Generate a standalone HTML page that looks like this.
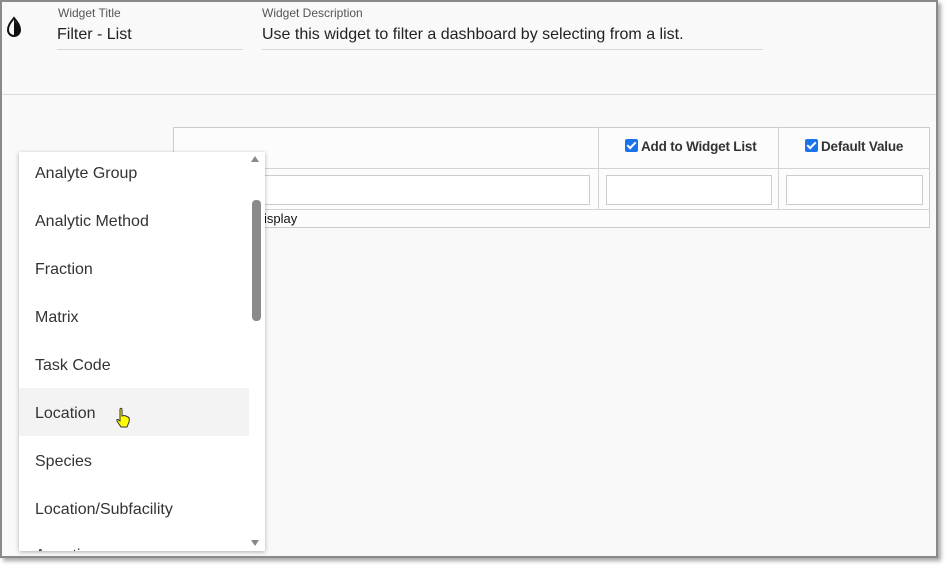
<!DOCTYPE html>
<html><head><style>
*{margin:0;padding:0;box-sizing:border-box}
body{width:951px;height:573px;background:#fff;position:relative;overflow:hidden;font-family:"Liberation Sans",sans-serif;color:#222}
.panel{position:absolute;left:0;top:0;width:938px;height:558px;background:#f9f9f9;border:2px solid #8a8a8a;box-shadow:3px 3px 4px rgba(0,0,0,.35)}
.a{position:absolute}
.lbl{font-size:12px;color:#555}
.val{font-size:16px;color:#222}
.ul{height:1px;background:#d8d8d8}
.hl{position:absolute;height:1px;background:#d4d4d4}
.vl{position:absolute;width:1px;background:#d4d4d4}
.inp{position:absolute;background:#fff;border:1px solid #ccc}
.cb{display:inline-block;width:13px;height:13px;background:#1a73e8;border-radius:2px;vertical-align:-1px;margin-right:3px;position:relative}
.cb:after{content:"";position:absolute;left:4px;top:1px;width:3px;height:7px;border:solid #fff;border-width:0 2px 2px 0;transform:rotate(45deg)}
.th{font-size:13.5px;font-weight:bold;color:#333;letter-spacing:-0.2px}
.dd{position:absolute;left:19px;top:152px;width:246px;height:399px;background:#fff;box-shadow:0 1px 4px rgba(0,0,0,.3);overflow:hidden}
.it{position:absolute;left:16px;font-size:16px;color:#333}
</style></head><body>
<div class="panel">
<svg class="a" style="left:2px;top:14px" width="20" height="22" viewBox="0 0 20 22"><path d="M10 2 C10 6 16 9 16 14 A6 6 0 0 1 10 20Z" fill="#111"/><path d="M10 2 C7 6 4 9 4 14 A6 6 0 0 0 16 14 C16 9 13 6 10 2Z" fill="none" stroke="#111" stroke-width="2"/></svg>
<div class="a lbl" style="left:56px;top:4px">Widget Title</div>
<div class="a val" style="left:55px;top:24px">Filter - List</div>
<div class="a ul" style="left:55px;top:47px;width:186px"></div>
<div class="a lbl" style="left:260px;top:4px">Widget Description</div>
<div class="a val" style="left:260px;top:24px">Use this widget to filter a dashboard by selecting from a list.</div>
<div class="a ul" style="left:260px;top:47px;width:501px"></div>
<div class="hl" style="left:0;top:92px;width:934px;background:#ddd"></div>
<div class="a" style="left:171px;top:125px;width:757px;height:101px;background:#fcfcfc;border:1px solid #ccc"></div>
<div class="hl" style="left:171px;top:166px;width:757px"></div>
<div class="hl" style="left:171px;top:207px;width:757px"></div>
<div class="vl" style="left:596px;top:125px;height:82px"></div>
<div class="vl" style="left:776px;top:125px;height:82px"></div>
<div class="a th" style="left:623px;top:137px"><span class="cb"></span>Add to Widget List</div>
<div class="a th" style="left:803px;top:137px"><span class="cb"></span>Default Value</div>
<div class="inp" style="left:240px;top:173px;width:348px;height:30px"></div>
<div class="inp" style="left:604px;top:173px;width:166px;height:30px"></div>
<div class="inp" style="left:784px;top:173px;width:137px;height:30px"></div>
<div class="a" style="left:262px;top:209px;font-size:13px;color:#111">isplay</div>
</div>
<div class="dd">
<div class="a" style="left:0;top:236px;width:230px;height:48px;background:#f3f3f3"></div>
<div class="it" style="top:13px">Analyte Group</div>
<div class="it" style="top:61px">Analytic Method</div>
<div class="it" style="top:109px">Fraction</div>
<div class="it" style="top:157px">Matrix</div>
<div class="it" style="top:205px">Task Code</div>
<div class="it" style="top:253px">Location</div>
<div class="it" style="top:301px">Species</div>
<div class="it" style="top:349px">Location/Subfacility</div>
<div class="it" style="top:395px">Aquatic</div>
<div class="a" style="left:232px;top:4px;width:0;height:0;border-left:4px solid transparent;border-right:4px solid transparent;border-bottom:6px solid #888"></div>
<div class="a" style="left:233px;top:48px;width:9px;height:121px;background:#8a8a8a;border-radius:4px"></div>
<div class="a" style="left:232px;top:388px;width:0;height:0;border-left:4px solid transparent;border-right:4px solid transparent;border-top:6px solid #888"></div>
<svg class="a" style="left:96px;top:255px" width="16" height="22" viewBox="0 0 16 22"><path d="M5 2 Q6 0.5 7 2 L7 9 L9 8.5 L11 9 L13 10 Q15 11 14 15 L12 20 L6 20 L2 14 Q1.5 12 3 12.5 L5 14Z" fill="#ff0" stroke="#333" stroke-width="1"/></svg>
</div>
</body></html>
